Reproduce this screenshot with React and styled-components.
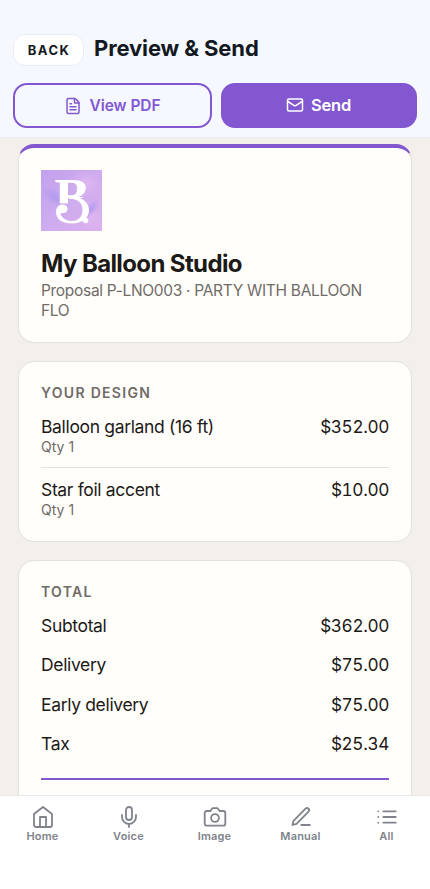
import React from 'react'
import styled, { createGlobalStyle } from 'styled-components'
import { Mic, FileText, Mail } from 'lucide-react'

const GlobalStyle = createGlobalStyle`
  * {
    box-sizing: border-box;
  }
  body {
    margin: 0;
    overflow: hidden;
    background: #f3f0eb;
    font-family: Inter, "Liberation Sans", sans-serif;
    color: #1c1917;
  }
`

const Page = styled.div`
  display: flex;
  flex-direction: column;
  height: 889px;
  overflow: hidden;
`

const Header = styled.header`
  flex: none;
  height: 138px;
  padding: 34px 13px 0;
  background: #f5f8ff;
  border-bottom: 1px solid #eceef3;
`

const TitleRow = styled.div`
  display: flex;
  align-items: center;
  gap: 10px;
`

const BackButton = styled.button`
  width: 71px;
  height: 32px;
  padding: 0 0 0 1px;
  border: 1px solid #e8eef7;
  border-radius: 12px;
  background: #fff;
  color: #14181f;
  font: 700 13px/30px Inter, sans-serif;
  letter-spacing: 1.4px;
`

const Title = styled.h1`
  margin: 0;
  padding-bottom: 4px;
  font-size: 22px;
  font-weight: 700;
  line-height: 28px;
  letter-spacing: -0.12px;
  color: #14181f;
`

const Actions = styled.div`
  display: grid;
  grid-template-columns: 199px 196px;
  gap: 9px;
  margin-top: 17px;
`

const ActionButton = styled.button`
  display: flex;
  align-items: center;
  justify-content: center;
  gap: 7px;
  height: 45px;
  padding: ${(p) => (p.$filled ? '0 1px 1px 0' : '0')};
  border: 2px solid #8257d0;
  border-radius: 14px;
  background: ${(p) => (p.$filled ? '#8257d0' : 'transparent')};
  color: ${(p) => (p.$filled ? '#fff' : '#8257d0')};
  font: 600 ${(p) => (p.$filled ? 16.5 : 15.5)}px/20px Inter, sans-serif;
  letter-spacing: ${(p) => (p.$filled ? -0.2 : -0.05)}px;
`

const Content = styled.main`
  flex: 1;
  min-height: 0;
  overflow: hidden;
  display: flex;
  flex-direction: column;
  gap: 18px;
  padding: 6px 18px 0;
`

const Card = styled.section`
  flex: none;
  height: ${(p) => p.$height}px;
  padding: 22px 22px 0;
  border: 1px solid #e5e1db;
  border-radius: 16px;
  background: #fffefb;
  ${(p) => p.$accent && 'border-top: 4px solid #8257d0;'}
`

const Logo = styled.svg`
  display: block;
  width: 61px;
  height: 61px;
  overflow: visible;
`

const StudioName = styled.h2`
  margin: 18px 0 0;
  font-size: 24px;
  font-weight: 700;
  line-height: 29px;
  letter-spacing: -0.62px;
`

const Proposal = styled.p`
  margin: 3px 0 0;
  font-size: 15.5px;
  line-height: 19.5px;
  letter-spacing: -0.31px;
  color: #706b67;
`

const SectionTitle = styled.h3`
  margin: 0 0 14px;
  font-size: 14px;
  font-weight: 600;
  line-height: 18px;
  letter-spacing: 1.3px;
  color: #706b67;
`

const Item = styled.div`
  padding-bottom: 11px;
  & + & {
    padding-top: 11px;
    border-top: 1px solid #e5e1db;
  }
`

const Line = styled.div`
  display: flex;
  justify-content: space-between;
  font-size: 17.5px;
  line-height: 22px;
  letter-spacing: -0.34px;
`

const Amount = styled.span`
  font-size: 17.2px;
  letter-spacing: -0.36px;
  font-variant-numeric: tabular-nums;
`

const Quantity = styled.div`
  font-size: 14px;
  line-height: 18px;
  color: #706b67;
`

const Totals = styled.div`
  display: flex;
  flex-direction: column;
  gap: 17.4px;
  padding-bottom: 23px;
  border-bottom: 2px solid #8257d0;
`

const Nav = styled.nav`
  flex: none;
  display: grid;
  grid-template-columns: repeat(5, 86px);
  height: 94px;
  padding-top: 9px;
  border-top: 1px solid #e8eaee;
  background: #fff;
`

const Tab = styled.a`
  display: flex;
  flex-direction: column;
  align-items: center;
  gap: 1px;
  padding-right: 1px;
  color: #80838b;
  font-size: 11px;
  font-weight: 600;
  line-height: 13px;
  letter-spacing: 0.2px;
`

const items = [
  { name: 'Balloon garland (16 ft)', qty: 1, price: '$352.00' },
  { name: 'Star foil accent', qty: 1, price: '$10.00' },
]

const totals = [
  ['Subtotal', '$362.00'],
  ['Delivery', '$75.00'],
  ['Early delivery', '$75.00'],
  ['Tax', '$25.34'],
]

const LineIcon = ({ children }) => (
  <svg width="24" height="24" viewBox="0 0 24 24" fill="none" stroke="currentColor" strokeWidth="1.8" strokeLinecap="round" strokeLinejoin="round">
    {children}
  </svg>
)

const HomeIcon = () => (
  <LineIcon>
    <path d="m3 9 9-7 9 7v11a2 2 0 0 1-2 2H5a2 2 0 0 1-2-2z" />
    <path d="M9 22V12h6v10" />
  </LineIcon>
)

const CameraIcon = () => (
  <LineIcon>
    <path d="M22.3 18.7a2 2 0 0 1-2 2H3.7a2 2 0 0 1-2-2V8a2 2 0 0 1 2-2h3.7l2-2.8h5.2l2 2.8h3.7a2 2 0 0 1 2 2z" />
    <circle cx="12" cy="13" r="3.9" />
  </LineIcon>
)

const PenIcon = () => (
  <LineIcon>
    <path d="M12.3 20h8.5" />
    <path d="M16.5 3.7a2.1 2.1 0 0 1 3 3L7.5 18.8l-4 1.2 1-4.2z" />
  </LineIcon>
)

const ListIcon = () => (
  <LineIcon>
    <path d="M8.3 6.3h12.4M8.3 12h12.4M8.3 17.7h12.4M3.3 6.3h.01M3.3 12h.01M3.3 17.7h.01" />
  </LineIcon>
)

const tabs = [
  ['Home', HomeIcon],
  ['Voice', Mic],
  ['Image', CameraIcon],
  ['Manual', PenIcon],
  ['All', ListIcon],
]

const Backdrop = () => (
  <>
    <path fill="url(#base)" d="M0 0h61v61H0z" />
    <ellipse cx="45" cy="14" rx="16" ry="14" fill="url(#pink)" />
    <ellipse cx="51" cy="49" rx="10" ry="12" fill="url(#pink)" />
    <ellipse cx="14" cy="27" rx="15" ry="8" fill="url(#blue)" transform="rotate(38 14 27)" />
    <ellipse cx="50" cy="39" rx="13" ry="5" fill="url(#blue)" transform="rotate(-50 50 39)" />
  </>
)

const StudioLogo = () => (
  <Logo viewBox="0 0 61 61">
    <defs>
      <linearGradient id="base" x1="0" y1="0" x2="1" y2="1">
        <stop offset="0" stopColor="#c2a0ed" />
        <stop offset=".5" stopColor="#ceacef" />
        <stop offset="1" stopColor="#dcb0ee" />
      </linearGradient>
      <radialGradient id="blue">
        <stop offset="0" stopColor="#b09bee" />
        <stop offset="1" stopColor="#b09bee" stopOpacity="0" />
      </radialGradient>
      <radialGradient id="pink">
        <stop offset="0" stopColor="#dfb6f0" />
        <stop offset="1" stopColor="#dfb6f0" stopOpacity="0" />
      </radialGradient>
      <clipPath id="below">
        <path d="M27 28h23v19H12V33.5h15z" />
      </clipPath>
    </defs>
    <Backdrop />
    <text x="13.5" y="45" fill="#fff" fontFamily="Liberation Serif" fontWeight="700" fontSize="53">B</text>
    <g clipPath="url(#below)">
      <Backdrop />
    </g>
    {/* curl under the letter */}
    <path
      fill="#fff"
      d="M28 26C40 26 48 32 48 40c0 8-7 13.500-17 13.500S15 49 15 42c0-5 3-7.500 6.500-7.500 3 0 5 2 5 4.500 0 3-2.500 4.500-5 4-1.500-.2-2 0-1.700 1.500C21 48.500 26 51 31 51c7 0 10.500-5 10.500-11C41.500 33 37 28.800 28 28.800z"
    />
    <circle cx="44.5" cy="50.5" r="2.8" fill="#fff" />
  </Logo>
)

const App = () => {
  return (
    <Page>
      <GlobalStyle />
      <Header>
        <TitleRow>
          <BackButton>BACK</BackButton>
          <Title>Preview &amp; Send</Title>
        </TitleRow>
        <Actions>
          <ActionButton>
            <FileText size={18} strokeWidth={2} />
            View PDF
          </ActionButton>
          <ActionButton $filled>
            <Mail size={18} strokeWidth={2} />
            Send
          </ActionButton>
        </Actions>
      </Header>
      <Content>
        <Card $height={199} $accent>
          <StudioLogo />
          <StudioName>My Balloon Studio</StudioName>
          <Proposal>Proposal P-LNO003 · PARTY WITH BALLOON FLO</Proposal>
        </Card>
        <Card $height={181}>
          <SectionTitle>YOUR DESIGN</SectionTitle>
          {items.map((item) => (
            <Item key={item.name}>
              <Line>
                <span>{item.name}</span>
                <Amount>{item.price}</Amount>
              </Line>
              <Quantity>Qty {item.qty}</Quantity>
            </Item>
          ))}
        </Card>
        <Card $height={300}>
          <SectionTitle>TOTAL</SectionTitle>
          <Totals>
            {totals.map(([label, amount]) => (
              <Line key={label}>
                <span>{label}</span>
                <Amount>{amount}</Amount>
              </Line>
            ))}
          </Totals>
        </Card>
      </Content>
      <Nav>
        {tabs.map(([label, Icon]) => (
          <Tab key={label}>
            <Icon size={24} strokeWidth={1.8} />
            {label}
          </Tab>
        ))}
      </Nav>
    </Page>
  )
}

export default App
